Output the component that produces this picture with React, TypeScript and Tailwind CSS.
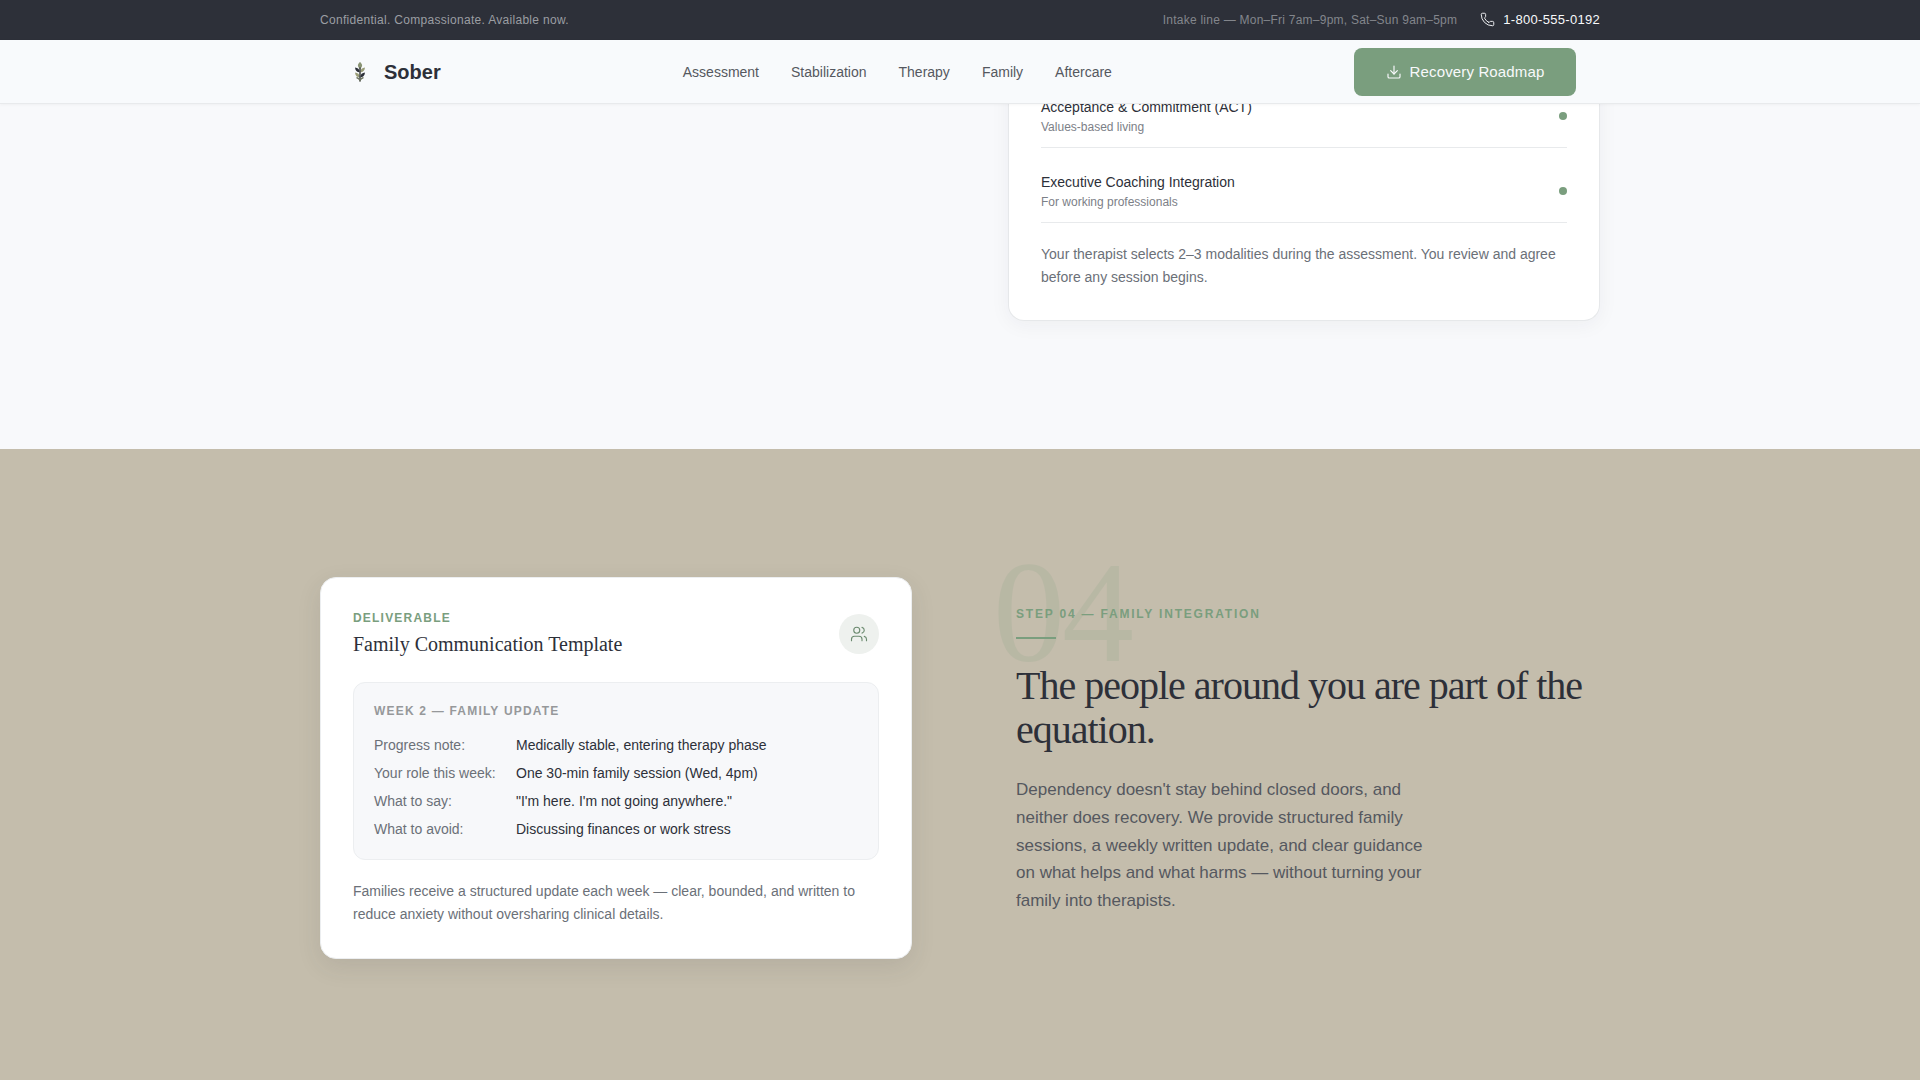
import { Download, Phone, Users } from 'lucide-react'

const modalityRows = [
  { title: 'Acceptance & Commitment (ACT)', sub: 'Values-based living' },
  { title: 'Executive Coaching Integration', sub: 'For working professionals' },
]

const updateRows = [
  ['Progress note:', 'Medically stable, entering therapy phase'],
  ['Your role this week:', 'One 30-min family session (Wed, 4pm)'],
  ['What to say:', '"I\'m here. I\'m not going anywhere."'],
  ['What to avoid:', 'Discussing finances or work stress'],
]

const navLinks = ['Assessment', 'Stabilization', 'Therapy', 'Family', 'Aftercare']

function Logo() {
  return (
    <svg width="32" height="32" viewBox="0 0 32 32" fill="none">
      <path d="M16 6c2.600 2.200 3 4.400 0 7c-3-2.600-2.600-4.800 0-7z" fill="#8a9474" />
      <path d="M11 11.500c2.800 0.300 4.600 1.700 4.800 4.800c-3-0.100-4.600-1.900-4.800-4.800z" fill="#2d3039" />
      <path d="M21 11.500c-2.800 0.300-4.600 1.700-4.800 4.800c3-0.100 4.600-1.900 4.800-4.800z" fill="#9a9d78" />
      <path d="M11 16.500c2.800 0.300 4.600 1.700 4.800 4.800c-3-0.100-4.600-1.900-4.800-4.800z" fill="#9a9d78" />
      <path d="M21 16.500c-2.800 0.300-4.600 1.700-4.800 4.800c3-0.100 4.600-1.900 4.800-4.800z" fill="#2d3039" />
      <path d="M16 12v13" stroke="#3c4040" strokeWidth="1.500" strokeLinecap="round" />
      <path d="M12.500 21.500c1.500 0.400 2.700 1.200 3.500 2.800c0.800-1.600 2-2.400 3.500-2.800" stroke="#6f7560" strokeWidth="1.300" />
    </svg>
  )
}

function Header() {
  return (
    <header className="relative z-10 shrink-0">
      <div className="h-10 bg-[#2d3039]">
        <div className="mx-auto flex h-full w-[1280px] items-center justify-between text-xs tracking-[0.025em]">
          <span className="text-[#9b9ea3]">Confidential. Compassionate. Available now.</span>
          <div className="flex items-center gap-6">
            <span className="tracking-[0.02em] text-[#83868c]">Intake line — Mon–Fri 7am–9pm, Sat–Sun 9am–5pm</span>
            <span className="flex items-center gap-2 text-[13px] text-[#f8f9fb]">
              <Phone size={15} strokeWidth={1.5} className="ml-[-1px]" />
              1-800-555-0192
            </span>
          </div>
        </div>
      </div>
      <div className="h-16 border-b border-[#e8eaec] bg-[#f8fafc] shadow-[0_1px_3px_rgba(0,0,0,0.04)]">
        <div className="mx-auto flex h-full w-[1280px] items-center justify-between px-6">
          <div className="flex items-center gap-2">
            <Logo />
            <span className="text-xl font-bold text-[#2d3039]">Sober</span>
          </div>
          <nav className="flex gap-8 text-sm text-[#55585f]">
            {navLinks.map(l => <span key={l}>{l}</span>)}
          </nav>
          <button className="flex h-12 w-[222px] items-center justify-center gap-2 rounded-lg bg-[#7a9e7e] pt-px text-[15px] tracking-[0.01em] text-[#f8f9fb]">
            <Download size={16} strokeWidth={1.75} />
            Recovery Roadmap
          </button>
        </div>
      </div>
    </header>
  )
}

function ModalityCard() {
  return (
    <section className="flex h-[345px] shrink-0 flex-col justify-end overflow-hidden bg-[#f8f9fb] pb-[128px]">
      <div className="mx-auto flex w-[1280px] justify-end">
        <div className="w-[592px] rounded-b-2xl border border-t-0 border-[#e6e8ea] bg-white px-8 pb-8 shadow-[0_4px_20px_rgba(45,48,57,0.05)]">
          {modalityRows.map(r => (
            <div key={r.title} className="flex items-center justify-between border-b border-[#e8eaec] pb-3 pt-6">
              <div>
                <div className="text-sm leading-5 text-[#2d3039]">{r.title}</div>
                <div className="mt-0.5 text-xs leading-4 text-[#7c8087]">{r.sub}</div>
              </div>
              <span className="h-2 w-2 rounded-full bg-[#7a9e7e]" />
            </div>
          ))}
          <p className="mt-5 text-sm leading-[22.400px] text-[#6b7078]">
            Your therapist selects 2–3 modalities during the assessment. You review and agree before any session begins.
          </p>
        </div>
      </div>
    </section>
  )
}

function TemplateCard() {
  return (
    <div className="w-[592px] rounded-2xl border border-[#eceef0] bg-white p-8 shadow-[0_8px_24px_rgba(45,48,57,0.1)]">
      <div className="flex items-start justify-between">
        <div>
          <div className="text-xs font-bold leading-4 tracking-[0.1em] text-[#7a9e7e]">DELIVERABLE</div>
          <div className="mt-1 font-['Liberation_Serif',serif] text-xl leading-7 text-[#2d3039]">Family Communication Template</div>
        </div>
        <div className="mt-1 flex h-10 w-10 items-center justify-center rounded-full bg-[#eef1ee] text-[#6b8a6f]">
          <Users size={18} strokeWidth={1.5} />
        </div>
      </div>
      <div className="mt-6 rounded-xl border border-[#eceef0] bg-[#f7f8fa] px-5 pb-4 pt-[20px]">
        <div className="mb-3 text-xs font-bold leading-4 tracking-[0.1em] text-[#96989a]">WEEK 2 — FAMILY UPDATE</div>
        {updateRows.map(([k, v]) => (
          <div key={k} className="flex text-sm leading-7">
            <span className="w-[142px] text-[#6b7078]">{k}</span>
            <span className="text-[#2d3039]">{v}</span>
          </div>
        ))}
      </div>
      <p className="mt-5 text-sm leading-[22.750px] text-[#6b7078]">
        Families receive a structured update each week — clear, bounded, and written to reduce anxiety without oversharing clinical details.
      </p>
    </div>
  )
}

function FamilySection() {
  return (
    <section className="flex-1 bg-[#c4bdac] pt-[128px]">
      <div className="mx-auto flex w-[1280px] items-start justify-between">
        <TemplateCard />
        <div className="relative w-[584px] pt-[29px]">
          <span className="absolute left-[-23px] top-[-36px] select-none font-['Liberation_Serif',serif] text-[144px] leading-none tracking-[-0.02em] text-[#7a9e7e] opacity-[0.15]">04</span>
          <div className="relative text-xs font-bold leading-4 tracking-[0.15em] text-[#7a9e7e]">STEP 04 — FAMILY INTEGRATION</div>
          <div className="relative mt-[15px] h-0.5 w-10 bg-[#7a9e7e]" />
          <h2 className="relative mt-[25px] font-['Liberation_Serif',serif] text-[40px] font-normal leading-[44px] tracking-[-0.025em] text-[#2d3039]">
            The people around you are part of the equation.
          </h2>
          <p className="relative mt-6 w-[420px] text-[17px] leading-[27.800px] text-[#55585f]">
            Dependency doesn't stay behind closed doors, and neither does recovery. We provide structured family sessions, a weekly written update, and clear guidance on what helps and what harms — without turning your family into therapists.
          </p>
        </div>
      </div>
    </section>
  )
}

export default function App() {
  return (
    <div className="flex h-screen flex-col overflow-hidden font-['Liberation_Sans',Arial,sans-serif]">
      <Header />
      <ModalityCard />
      <FamilySection />
    </div>
  )
}
